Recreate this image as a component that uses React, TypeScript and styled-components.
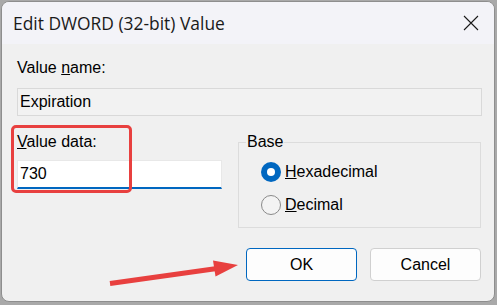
import styled, { createGlobalStyle } from 'styled-components';

const GlobalStyle = createGlobalStyle`
    html, body {
        margin: 0;
        padding: 0;
        background: #a9a9a9;
    }
`;

const Page = styled.div`
    position: relative;
    width: 497px;
    height: 305px;
    padding: 1px 0 0 1px;
    box-sizing: border-box;
    font-family: 'Liberation Sans', Arial, sans-serif;
    font-size: 16px;
    color: #000;
`;

const Dialog = styled.div`
    width: 494px;
    height: 301px;
    box-sizing: border-box;
    border: 1px solid #8e8e8e;
    border-radius: 8px;
    overflow: hidden;
    background: #f0f0f0;
    display: flex;
    flex-direction: column;
`;

const TitleBar = styled.div`
    height: 42px;
    flex: none;
    background: #f3f3f8;
    display: flex;
    align-items: center;
    justify-content: space-between;
    padding: 0 15px 0 11px;
`;

const Title = styled.span`
    font-family: 'Open Sans', 'Noto Sans', sans-serif;
    font-size: 17.4px;
    color: #1a1a1a;
    margin-top: -1px;
`;

const Content = styled.div`
    padding: 15px 13px 0 15px;
    display: flex;
    flex-direction: column;
`;

const Label = styled.div`
    line-height: 18px;
    height: 18px;
`;

const ReadOnlyBox = styled.div`
    margin-top: 11px;
    width: 465px;
    height: 28px;
    box-sizing: border-box;
    border: 1px solid #d9d9d9;
    background: #f2f2f2;
    padding: 0 2px;
    display: flex;
    align-items: center;
`;

const Row = styled.div`
    display: flex;
    align-items: flex-start;
    margin-top: 17px;
`;

const LeftColumn = styled.div`
    width: 205px;
    display: flex;
    flex-direction: column;
`;

const DataInput = styled.div`
    margin-top: 9px;
    height: 29px;
    box-sizing: border-box;
    background: #ffffff;
    border: 1px solid #e8e8e8;
    border-bottom: 2px solid #0067c0;
    padding: 0 2px;
    display: flex;
    align-items: center;
`;

const GroupBox = styled.fieldset`
    margin: 0 0 0 16px;
    padding: 0 0 6px 0;
    width: 243px;
    box-sizing: border-box;
    min-width: 0;
    border: 1px solid #dcdcdc;
`;

const Legend = styled.legend`
    margin-left: 7px;
    padding: 0 1px;
    line-height: 18px;
`;

const RadioList = styled.div`
    padding-top: 4px;
    display: flex;
    flex-direction: column;
`;

const RadioRow = styled.div`
    height: 33px;
    display: flex;
    align-items: center;
    padding-left: 22px;
    gap: 4px;
`;

const RadioCircle = styled.span<{ $checked?: boolean }>`
    width: 20px;
    height: 20px;
    box-sizing: border-box;
    border-radius: 50%;
    display: flex;
    align-items: center;
    justify-content: center;
    background: ${p => (p.$checked ? '#0067c0' : '#f3f3f3')};
    border: ${p => (p.$checked ? 'none' : '1px solid #8a8a8a')};

    &::after {
        content: '';
        display: ${p => (p.$checked ? 'block' : 'none')};
        width: 8px;
        height: 8px;
        border-radius: 50%;
        background: #ffffff;
    }
`;

const Buttons = styled.div`
    display: flex;
    justify-content: flex-end;
    gap: 13px;
    margin-top: 20px;
`;

const Button = styled.div<{ $primary?: boolean }>`
    width: 111px;
    height: 33px;
    box-sizing: border-box;
    border-radius: 4px;
    background: #fdfdfd;
    border: 1px solid ${p => (p.$primary ? '#0067c0' : '#d0d0d0')};
    display: flex;
    align-items: center;
    justify-content: center;
`;

const Highlight = styled.div`
    position: absolute;
    left: 11px;
    top: 125px;
    width: 121px;
    height: 68px;
    box-sizing: border-box;
    border: 3px solid #e8403f;
    border-radius: 5px;
`;

const Arrow = styled.svg`
    position: absolute;
    left: 0;
    top: 0;
    pointer-events: none;
`;

const CloseIcon = () => (
    <svg width="16" height="16" viewBox="0 0 16 16">
        <path d="M1 1 L15 15 M15 1 L1 15" stroke="#1a1a1a" strokeWidth="1.1" fill="none" />
    </svg>
);

const App = () => {
    return (
        <Page>
            <GlobalStyle />
            <Dialog>
                <TitleBar>
                    <Title>Edit DWORD (32-bit) Value</Title>
                    <CloseIcon />
                </TitleBar>
                <Content>
                    <Label>
                        Value <u>n</u>ame:
                    </Label>
                    <ReadOnlyBox>Expiration</ReadOnlyBox>
                    <Row>
                        <LeftColumn>
                            <Label>
                                <u>V</u>alue data:
                            </Label>
                            <DataInput>730</DataInput>
                        </LeftColumn>
                        <GroupBox>
                            <Legend>Base</Legend>
                            <RadioList>
                                <RadioRow>
                                    <RadioCircle $checked />
                                    <span>
                                        <u>H</u>exadecimal
                                    </span>
                                </RadioRow>
                                <RadioRow>
                                    <RadioCircle />
                                    <span>
                                        <u>D</u>ecimal
                                    </span>
                                </RadioRow>
                            </RadioList>
                        </GroupBox>
                    </Row>
                    <Buttons>
                        <Button $primary>OK</Button>
                        <Button>Cancel</Button>
                    </Buttons>
                </Content>
            </Dialog>
            <Highlight />
            <Arrow width="497" height="305" viewBox="0 0 497 305">
                <line x1="110" y1="283.5" x2="217" y2="268.5" stroke="#e8403f" strokeWidth="5" />
                <polygon points="238,265 213,260.5 215.5,276.5" fill="#e8403f" />
            </Arrow>
        </Page>
    );
};

export default App;
